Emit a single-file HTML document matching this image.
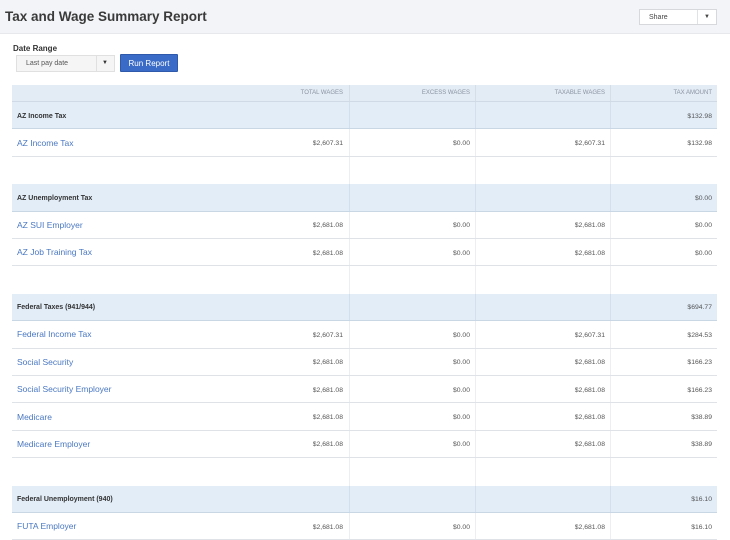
<!DOCTYPE html>
<html><head><meta charset="utf-8"><style>
*{margin:0;padding:0;box-sizing:border-box}
body{width:730px;height:536px;overflow:hidden;background:#fff;font-family:"Liberation Sans",Arial,sans-serif;position:relative}
.top{position:absolute;left:0;top:0;width:730px;height:34px;background:#f3f4f7;border-bottom:1px solid #e6e8ec}
.title{position:absolute;left:5px;top:9px;font-size:13.5px;font-weight:bold;color:#3a3a3a}
.share{position:absolute;left:639px;top:9px;width:78px;height:16px;background:#fff;border:1px solid #d6d8dc;font-size:7px;color:#444;padding:4px 0 0 9px}
.share:after{content:"";position:absolute;right:0;top:0;width:18px;height:14px;border-left:1px solid #e0e2e5}
.share b{position:absolute;right:6px;top:4px;font-size:6px;z-index:2}
.dr{position:absolute;left:13px;top:44px;font-size:8px;font-weight:bold;color:#333}
.sel{position:absolute;left:16px;top:55px;width:99px;height:17px;background:#f5f5f5;border:1px solid #e0e0e0;font-size:7px;color:#555;padding:4px 0 0 9px}
.sel:after{content:"";position:absolute;right:17px;top:0;height:15px;border-left:1px solid #e0e0e0}
.sel b{position:absolute;right:6px;top:4px;font-size:6px;color:#333}
.btn{position:absolute;left:120px;top:54px;width:58px;height:18px;background:#3a6bc6;border:1px solid #2f5aab;color:#fff;font-size:8px;text-align:center;padding-top:4px;border-radius:1px}
.row{position:absolute;left:12px;width:705px;display:flex;border-bottom:1px solid #dfe2e6}
.row div{flex:none;height:100%;display:flex;align-items:center;justify-content:flex-end;padding-right:5px;padding-top:2px;font-size:6.8px;color:#555;border-right:1px solid #eceef1;white-space:nowrap}
.row div:nth-child(1){width:238px;justify-content:flex-start;padding-left:5px;padding-top:0;font-size:8.5px;color:#4a78c2;border-right:none}
.row div:nth-child(2){width:100px;padding-right:6px}.row div:nth-child(3){width:126px}.row div:nth-child(4){width:135px}.row div:nth-child(5){width:106px;border-right:none}
.h{background:#e3ebf4;border-bottom:1px solid #d0dae6}
.h div{color:#8a95a3!important;font-size:6px!important;padding-top:0!important;border-right-color:#d5dde7!important}
.g{background:#e2edf8;border-bottom:1px solid #c9d6e4}
.g div{border-right-color:#d3dfec!important}
.g div:nth-child(1){color:#333!important;font-size:7px!important;font-weight:bold;padding-top:2px!important}
.e{border-bottom:none}
</style></head><body>
<div class="top"><div class="title">Tax and Wage Summary Report</div><div class="share">Share<b>▼</b></div></div>
<div class="dr">Date Range</div>
<div class="sel">Last pay date<b>▼</b></div>
<div class="btn">Run Report</div>

<div class="row h" style="top:85px;height:17px"><div></div><div>TOTAL WAGES</div><div>EXCESS WAGES</div><div>TAXABLE WAGES</div><div>TAX AMOUNT</div></div>

<div class="row g" style="top:102px;height:27.4px"><div>AZ Income Tax</div><div></div><div></div><div></div><div>$132.98</div></div>
<div class="row" style="top:129.4px;height:27.4px"><div>AZ Income Tax</div><div>$2,607.31</div><div>$0.00</div><div>$2,607.31</div><div>$132.98</div></div>
<div class="row e" style="top:156.8px;height:27.4px"><div></div><div></div><div></div><div></div><div></div></div>
<div class="row g" style="top:184.2px;height:27.4px"><div>AZ Unemployment Tax</div><div></div><div></div><div></div><div>$0.00</div></div>
<div class="row" style="top:211.6px;height:27.4px"><div>AZ SUI Employer</div><div>$2,681.08</div><div>$0.00</div><div>$2,681.08</div><div>$0.00</div></div>
<div class="row" style="top:239px;height:27.4px"><div>AZ Job Training Tax</div><div>$2,681.08</div><div>$0.00</div><div>$2,681.08</div><div>$0.00</div></div>
<div class="row e" style="top:266.4px;height:27.4px"><div></div><div></div><div></div><div></div><div></div></div>
<div class="row g" style="top:293.8px;height:27.4px"><div>Federal Taxes (941/944)</div><div></div><div></div><div></div><div>$694.77</div></div>
<div class="row" style="top:321.2px;height:27.4px"><div>Federal Income Tax</div><div>$2,607.31</div><div>$0.00</div><div>$2,607.31</div><div>$284.53</div></div>
<div class="row" style="top:348.6px;height:27.4px"><div>Social Security</div><div>$2,681.08</div><div>$0.00</div><div>$2,681.08</div><div>$166.23</div></div>
<div class="row" style="top:376px;height:27.4px"><div>Social Security Employer</div><div>$2,681.08</div><div>$0.00</div><div>$2,681.08</div><div>$166.23</div></div>
<div class="row" style="top:403.4px;height:27.4px"><div>Medicare</div><div>$2,681.08</div><div>$0.00</div><div>$2,681.08</div><div>$38.89</div></div>
<div class="row" style="top:430.8px;height:27.4px"><div>Medicare Employer</div><div>$2,681.08</div><div>$0.00</div><div>$2,681.08</div><div>$38.89</div></div>
<div class="row e" style="top:458.2px;height:27.4px"><div></div><div></div><div></div><div></div><div></div></div>
<div class="row g" style="top:485.6px;height:27.4px"><div>Federal Unemployment (940)</div><div></div><div></div><div></div><div>$16.10</div></div>
<div class="row" style="top:513px;height:27.4px"><div>FUTA Employer</div><div>$2,681.08</div><div>$0.00</div><div>$2,681.08</div><div>$16.10</div></div>
</body></html>
